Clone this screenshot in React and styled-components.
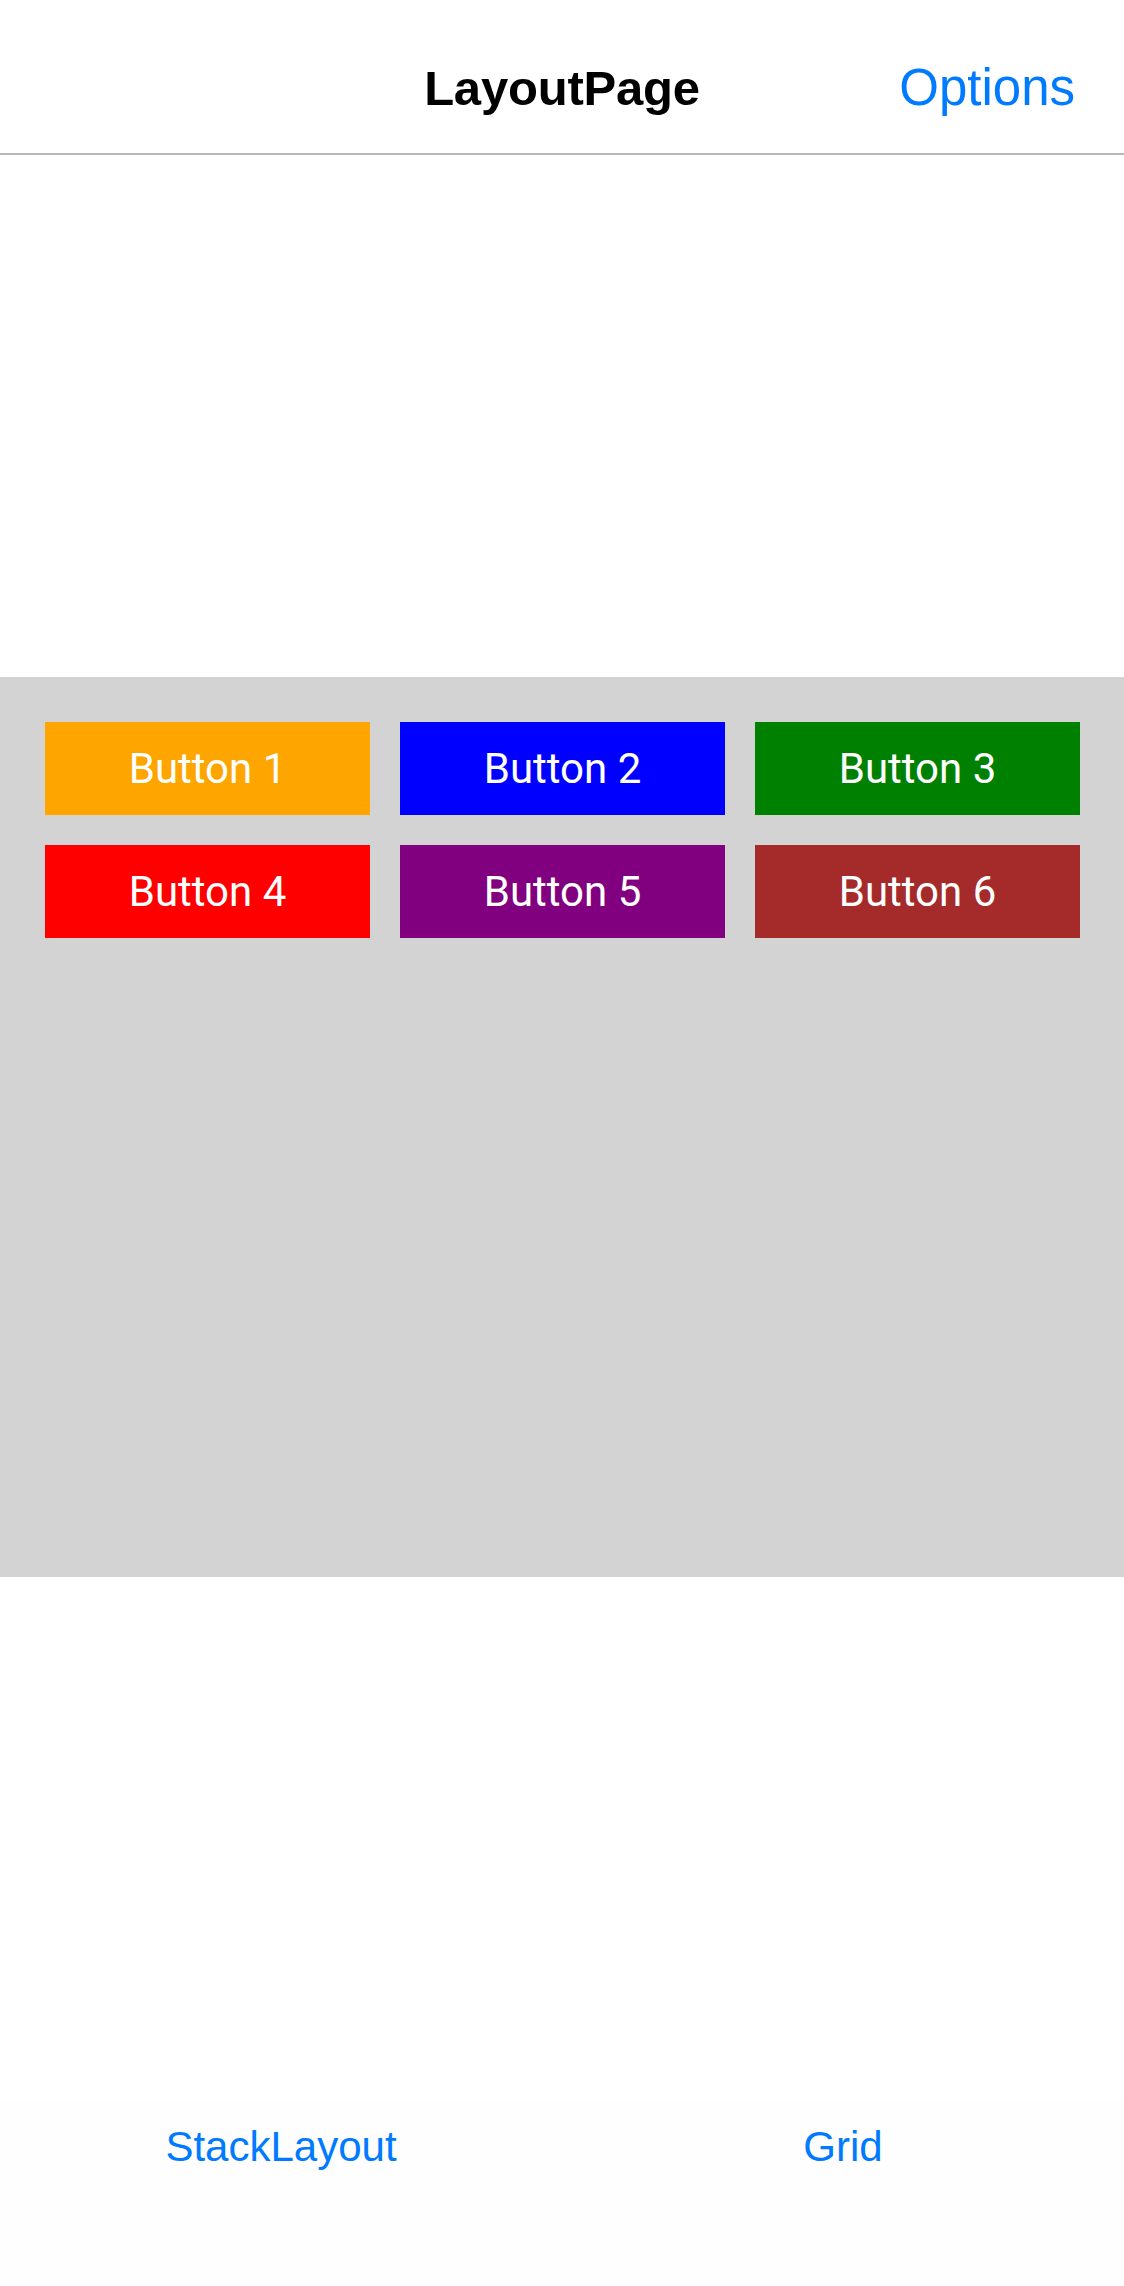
import React from "react";
import styled, { createGlobalStyle } from "styled-components";

const GlobalStyle = createGlobalStyle`
  html, body {
    margin: 0;
    padding: 0;
    background: #fff;
  }
  body {
    font-family: "Liberation Sans", Arial, sans-serif;
  }
`;

const Page = styled.div`
  display: flex;
  flex-direction: column;
  width: 1124px;
  height: 2286px;
  background: #fff;
`;

const NavBar = styled.header`
  display: grid;
  grid-template-columns: 1fr auto 1fr;
  align-items: center;
  height: 155px;
  padding: 0 49px;
  border-bottom: 2px solid #b8b8b8;
  box-sizing: border-box;
`;

const Title = styled.h1`
  grid-column: 2;
  margin: 0;
  padding-top: 22px;
  font-size: 49px;
  font-weight: 700;
  color: #000;
  letter-spacing: -0.2px;
`;

const NavAction = styled.button`
  grid-column: 3;
  justify-self: end;
  background: none;
  border: none;
  padding: 22px 0 0 0;
  font-family: inherit;
  font-size: 51px;
  color: #007aff;
  cursor: pointer;
`;

const Main = styled.main`
  flex: 1;
  display: flex;
  align-items: center;
`;

const Panel = styled.section`
  width: 100%;
  height: 900px;
  background: #d3d3d3;
  box-sizing: border-box;
  padding: 45px 44px 0 45px;
`;

const ButtonGrid = styled.div`
  display: grid;
  grid-template-columns: repeat(3, 1fr);
  grid-auto-rows: 93px;
  gap: 30px;
`;

const ColorButton = styled.button`
  border: none;
  margin: 0;
  background: ${({ color }) => color};
  color: #fff;
  font-family: Roboto, "Liberation Sans", sans-serif;
  font-size: 42px;
  font-weight: 400;
  cursor: pointer;
`;

const TabBar = styled.nav`
  display: grid;
  grid-template-columns: 1fr 1fr;
  height: 187px;
  padding-top: 23px;
  box-sizing: border-box;
  background: #fefefe;
`;

const Tab = styled.button`
  align-self: start;
  background: none;
  border: none;
  padding: 0;
  font-family: inherit;
  font-size: 42px;
  line-height: 50px;
  color: #007aff;
  cursor: pointer;
`;

const buttons = [
  { label: "Button 1", color: "#ffa500" },
  { label: "Button 2", color: "#0000ff" },
  { label: "Button 3", color: "#008000" },
  { label: "Button 4", color: "#ff0000" },
  { label: "Button 5", color: "#800080" },
  { label: "Button 6", color: "#a52a2a" },
];

export default function App() {
  return (
    <>
      <GlobalStyle />
      <Page>
        <NavBar>
          <Title>LayoutPage</Title>
          <NavAction>Options</NavAction>
        </NavBar>
        <Main>
          <Panel>
            <ButtonGrid>
              {buttons.map((b) => (
                <ColorButton key={b.label} color={b.color}>
                  {b.label}
                </ColorButton>
              ))}
            </ButtonGrid>
          </Panel>
        </Main>
        <TabBar>
          <Tab>StackLayout</Tab>
          <Tab>Grid</Tab>
        </TabBar>
      </Page>
    </>
  );
}
